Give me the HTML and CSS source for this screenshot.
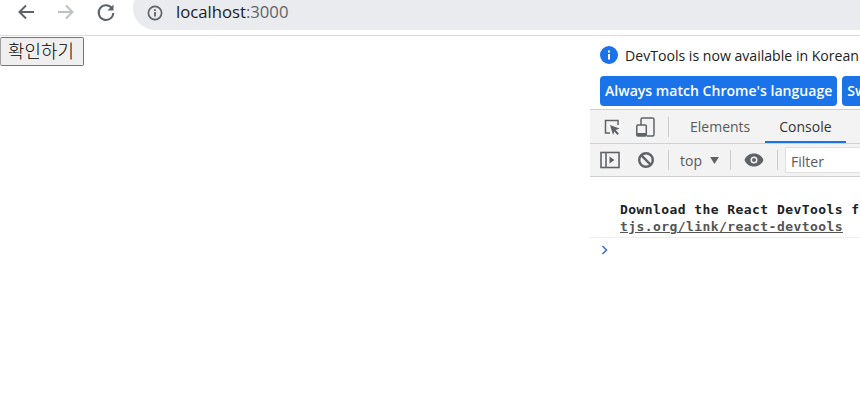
FILE: index.html
```html
<!DOCTYPE html>
<html lang="ko">
<head>
<meta charset="utf-8">
<title>localhost:3000</title>
<link rel="stylesheet" href="styles.css">
</head>
<body>
<header class="browser-bar">
  <svg class="nav-icon" width="20" height="20" viewBox="0 0 20 20"><path d="M18 10H4M10 3.5L3.5 10l6.5 6.5" fill="none" stroke="#5f6368" stroke-width="2"/></svg>
  <svg class="nav-icon" width="20" height="20" viewBox="0 0 20 20"><path d="M2 10h14M10 3.5l6.500 6.500-6.500 6.500" fill="none" stroke="#bdc1c6" stroke-width="2"/></svg>
  <svg class="nav-icon" width="20" height="20" viewBox="0 0 20 20"><path d="M16 6.500A7.300 7.300 0 1 0 17.300 11" fill="none" stroke="#5f6368" stroke-width="2"/><path d="M17.500 2.500V8.500H11.500Z" fill="#5f6368"/></svg>
  <div class="omnibox">
    <svg width="16" height="16" viewBox="0 0 16 16"><circle cx="8" cy="8" r="6.600" fill="none" stroke="#5f6368" stroke-width="1.700"/><path d="M7.100 7h1.800v4.500H7.100zM7.100 4.200h1.800v1.700H7.100z" fill="#5f6368"/></svg>
    <span class="url">localhost<span class="port">:3000</span></span>
  </div>
</header>
<main class="main">
  <section class="page">
    <button class="confirm" type="button">확인하기</button>
  </section>
  <aside class="devtools">
    <div class="infobar">
      <div class="info-row">
        <svg width="18" height="18" viewBox="0 0 18 18"><circle cx="9" cy="9" r="9" fill="#1a73e8"/><path d="M8 8h2v5.500H8zM8 4.500h2v2H8z" fill="#fff"/></svg>
        <span>DevTools is now available in Korean</span>
      </div>
      <div class="info-actions">
        <span class="pill">Always match Chrome's language</span>
        <span class="pill">Switch DevTools to Korean</span>
      </div>
    </div>
    <nav class="tabs">
      <svg class="tool-icon" width="20" height="20" viewBox="0 0 20 20"><path d="M8 16H3.500V3.500H16V8" fill="none" stroke="#5f6368" stroke-width="1.500"/><path d="M8 8l9.500 3.500-3.700 1.500 3 3.500-1.500 1.500-3-3.500-1.300 3.500z" fill="#5f6368"/></svg>
      <svg class="tool-icon device" width="22" height="22" viewBox="0 0 22 22"><path d="M7 9V3.500A1.500 1.500 0 0 1 8.500 2h10A1.500 1.500 0 0 1 20 3.500v15a1.500 1.500 0 0 1-1.500 1.500H13" fill="none" stroke="#5f6368" stroke-width="1.500"/><rect x="2.800" y="9" width="9.500" height="11" rx="1" fill="none" stroke="#5f6368" stroke-width="1.500"/><rect x="2.800" y="17" width="9.500" height="3" fill="#5f6368"/></svg>
      <span class="divider tab-divider"></span>
      <span class="tab">Elements</span>
      <span class="tab tab-active">Console</span>
    </nav>
    <div class="console-bar">
      <svg class="tool-icon" width="20" height="18" viewBox="0 0 20 18"><rect x="1" y="1.500" width="18" height="15" fill="none" stroke="#5f6368" stroke-width="1.600"/><path d="M6 1.500v15" stroke="#5f6368" stroke-width="1.600"/><path d="M9.500 5.500l5 3.500-5 3.500z" fill="#5f6368"/></svg>
      <svg class="tool-icon block" width="18" height="18" viewBox="0 0 18 18"><circle cx="9" cy="9" r="6.800" fill="none" stroke="#5f6368" stroke-width="2.400"/><path d="M4.200 4.200l9.600 9.600" stroke="#5f6368" stroke-width="2.400"/></svg>
      <span class="divider"></span>
      <span class="context">top</span>
      <svg class="caret" width="9" height="7" viewBox="0 0 10 8"><path d="M0 0h10L5 8z" fill="#5f6368"/></svg>
      <span class="divider"></span>
      <svg class="eye" width="20" height="14" viewBox="0 0 20 14"><path fill-rule="evenodd" d="M10 0.500C5.500 0.500 2 3 0.500 7 2 11 5.500 13.500 10 13.500S18 11 19.500 7C18 3 14.500 0.500 10 0.500zM10 3.500a3.500 3.500 0 1 1 0 7 3.500 3.500 0 0 1 0-7z" fill="#5f6368"/><circle cx="10" cy="7" r="2" fill="#5f6368"/></svg>
      <span class="divider"></span>
      <span class="filter">Filter</span>
    </div>
    <div class="console-body">
      <div class="message">
        <div class="message-line">Download the React DevTools f</div>
        <a class="message-link">tjs.org/link/react-devtools</a>
      </div>
      <div class="prompt"><svg width="8" height="10" viewBox="0 0 8 10"><path d="M1.500 1l4 4-4 4" fill="none" stroke="#3b6fd8" stroke-width="1.600"/></svg></div>
    </div>
  </aside>
</main>
</body>
</html>
```
FILE: styles.css
```css
* { box-sizing: border-box; }
html, body { margin: 0; height: 100%; overflow: hidden; background: #fff; }
body { font-family: "Open Sans", "Noto Sans", sans-serif; width: 860px; height: 413px; }

.browser-bar {
  height: 36px;
  display: flex;
  align-items: flex-start;
  border-bottom: 1px solid #dadce0;
  padding-left: 16px;
  overflow: hidden;
}
.nav-icon { margin-top: 2px; margin-right: 20px; flex: none; }
.nav-icon:nth-child(3) { margin-right: 17px; }
.omnibox {
  flex: 1;
  height: 44px;
  margin-top: -14px;
  margin-right: -40px;
  padding: 14px 0 0 14px;
  background: #e9ebee;
  border-radius: 22px;
  display: flex;
  align-items: center;
  gap: 13px;
}
.omnibox svg { position: relative; top: -2px; }
.url { font-size: 16.7px; color: #202124; line-height: 24px; position: relative; top: -3px; }
.port { color: #5f6368; }

.main { display: flex; height: 377px; }
.page { width: 590px; flex: none; }
.confirm {
  display: block;
  width: 84px;
  height: 29px;
  margin: 1px 0 0 0;
  padding: 0 2px 4px 0;
  font-family: "Noto Sans CJK KR", sans-serif;
  font-size: 17.9px;
  font-weight: 300;
  line-height: 24px;
  color: #000;
  background: #efefef;
  border: 1px solid #767676;
  border-left-color: #a0a0a0;
  border-radius: 2px;
}

.devtools { width: 270px; flex: none; overflow: hidden; }
.infobar { height: 74px; padding: 9px 0 0 10px; border-bottom: 1px solid #d0d0d0; }
.info-row { display: flex; align-items: center; gap: 7px; height: 20px; white-space: nowrap; font-size: 14.1px; color: #202124; }
.info-row svg { flex: none; }
.info-actions { display: flex; gap: 5px; margin-top: 11px; white-space: nowrap; }
.pill {
  flex: none;
  height: 30px;
  padding: 0 5px;
  border-radius: 4px;
  background: #1a73e8;
  color: #fff;
  font-size: 14.07px;
  font-weight: 600;
  line-height: 30px;
}

.tabs {
  height: 34px;
  display: flex;
  align-items: center;
  padding-left: 12px;
  background: #f3f3f3;
  border-bottom: 1px solid #d0d0d0;
  font-size: 14px;
  color: #5a5a5a;
}
.tool-icon { flex: none; }
.device { margin-left: 12px; }
.divider { width: 1px; height: 20px; background: #ccc; flex: none; }
.tab-divider { margin-left: 12px; }
.tab { padding: 0 14px; height: 33px; line-height: 34px; }
.tab:nth-of-type(2) { margin-left: 7px; }
.tab-active { color: #333; border-bottom: 2px solid #1a73e8; margin-left: 1px; }

.console-bar {
  height: 33px;
  display: flex;
  align-items: center;
  padding-left: 10px;
  background: #f3f3f3;
  border-bottom: 1px solid #d0d0d0;
  font-size: 14px;
  color: #5a5a5a;
}
.block { margin-left: 17px; }
.console-bar .divider:nth-of-type(1) { margin-left: 13px; }
.context { margin-left: 11px; }
.caret { margin-left: 8px; }
.caret + .divider { margin-left: 11px; }
.eye { margin-left: 13px; }
.eye + .divider { margin-left: 13px; }
.filter {
  margin-left: 7px;
  flex: 1;
  height: 26px;
  line-height: 27px;
  padding-left: 5px;
  background: #fff;
  border: 1px solid #e0e0e0;
  border-right: 0;
  color: #5a5a5a;
}

.console-body { font-family: "DejaVu Sans Mono", monospace; font-size: 13px; letter-spacing: 0.43px; line-height: 18px; }
.message { padding: 24px 0 1px 30px; border-bottom: 1px solid #eee; height: 61px; overflow: hidden; white-space: nowrap; }
.message-line { font-weight: 700; color: #202124; line-height: 17px; }
.message-link { display: block; font-weight: 700; color: #555; text-decoration: underline; line-height: 18px; }
.prompt { padding: 6px 0 0 11px; height: 20px; line-height: 14px; }
```
